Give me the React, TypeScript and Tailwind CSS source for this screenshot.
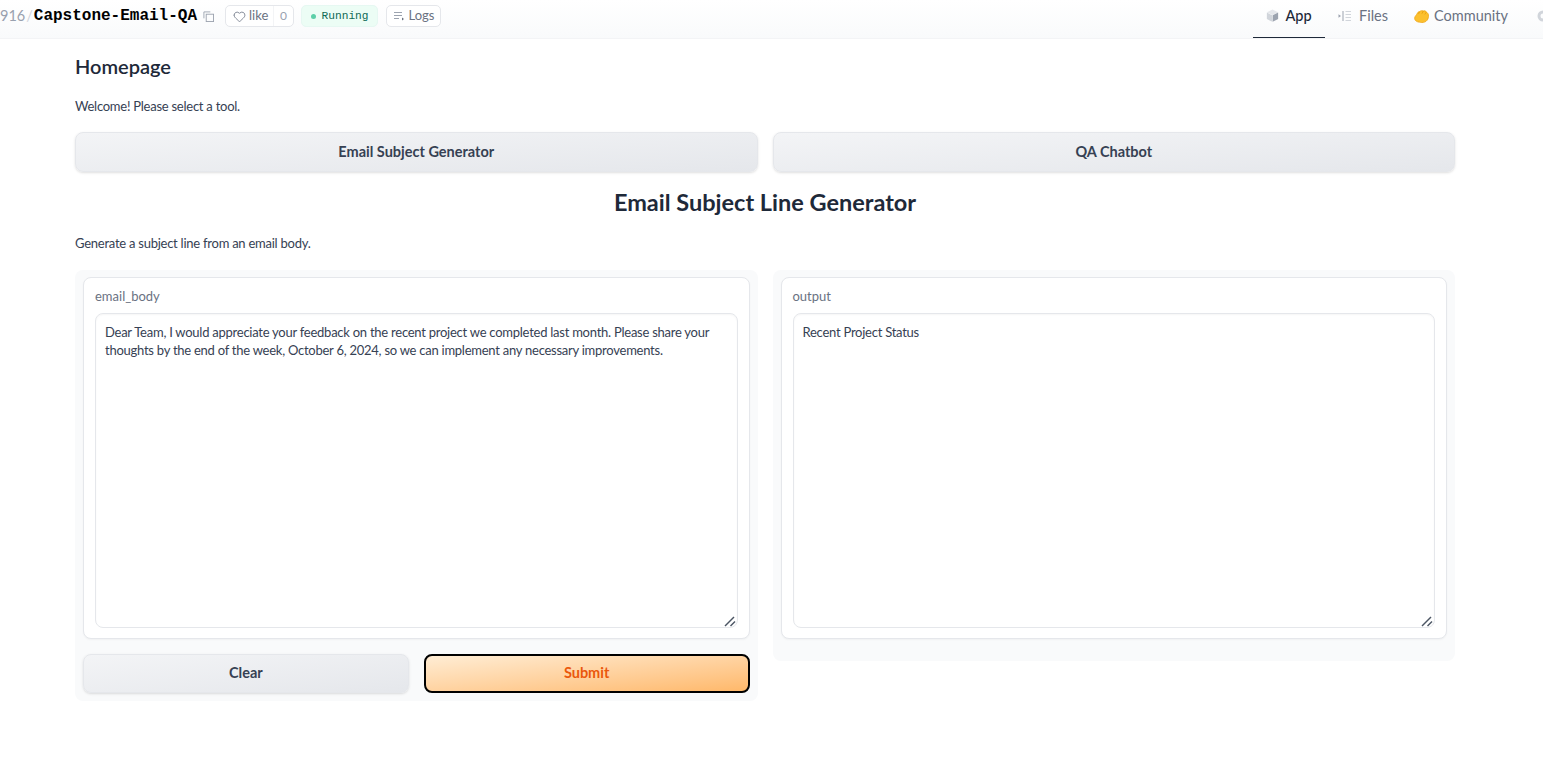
import { Heart } from "lucide-react";

const sans = "font-['Lato',sans-serif]";

function CubeIcon() {
  return (
    <svg viewBox="0 0 12 12" className="w-[13px] h-[13px]">
      <path d="M6 .4 11.200 3 6 5.600 .8 3z" fill="#e5e7eb" />
      <path d="M.8 3.200 5.800 5.800V11.800L.8 9.200z" fill="#d1d5db" />
      <path d="M11.200 3.200 6.200 5.800V11.800L11.200 9.200z" fill="#9ca3af" />
    </svg>
  );
}

function FilesIcon() {
  return (
    <svg viewBox="0 0 14 12" className="w-[14px] h-[12px]" fill="none" stroke="#9ca3af">
      <path d="M0.500 4.200 3 6 .5 7.800z" fill="#9ca3af" stroke="none" />
      <path d="M5 1v10" />
      <path d="M7.500 1.500H13M7.500 4.500H13M7.500 7.500H13M7.500 10.500H13" stroke="#d1d5db" />
    </svg>
  );
}

function HandIcon() {
  return (
    <svg viewBox="0 0 16 14" className="w-[15px] h-[13px]">
      <path
        d="M.6 9C.6 7 2 6 3 4.500 3.600 3 4.600 1.700 6 1.700 7 .7 8.600.4 10 1c1.300-.4 2.600 0 3.200 1.200 1.200.7 2.100 1.800 2.300 3.200.2 2-.2 4-1.300 5.500-1.300 1.800-3.700 2.700-5.900 2.600C5.300 13.400.6 12.500.6 9z"
        fill="#fcc02e"
        stroke="#eea20f"
        strokeWidth=".8"
      />
      <path d="M6 1.800 4.800 4.400M10 1.100 8.400 4M13.200 2.200 11.600 4.800" stroke="#e49a0b" strokeWidth=".8" fill="none" />
    </svg>
  );
}

function TopBar() {
  return (
    <header className="h-[39px] flex items-center justify-between border-b border-gray-100 bg-gradient-to-t from-gray-50 to-white overflow-hidden">
      <div className="flex items-center pb-[6px]">
        <span className="text-[14.500px] text-gray-400">916</span>
        <span className="text-[14.500px] text-gray-300 mx-[1px]">/</span>
        <span className="font-['Liberation_Mono',monospace] font-bold text-[16px] text-black">Capstone-Email-QA</span>
        <svg viewBox="0 0 12 12" className="w-[11px] h-[11px] ml-[6px] mr-[11px]" fill="none" stroke="#9ca3af">
          <rect x="3.500" y="3.500" width="8" height="8" />
          <path d="M1 8V1h7" />
        </svg>
        <div className="h-[22px] w-[69px] flex items-center border border-gray-200 rounded-[5px] bg-white text-[13px] text-gray-500">
          <span className="flex items-center gap-[3px] pl-[7px] w-[48px] h-full border-r border-gray-100">
            <Heart className="w-[13px] h-[13px]" strokeWidth={1.500} />
            like
          </span>
          <span className="flex-1 text-center text-gray-400 text-[12px]">0</span>
        </div>
        <div className="ml-[7px] h-[22px] w-[77px] flex items-center justify-center gap-[6px] rounded-[5px] border border-[#e6f8f2] bg-[#ecfdf5] font-['Liberation_Mono',monospace] text-[11.200px] text-[#0f6b57]">
          <span className="w-[5px] h-[5px] rounded-full bg-[#5ccfa8]" />
          <span className="pt-[1px]">Running</span>
        </div>
        <div className="ml-[8px] h-[22px] w-[55px] flex items-center justify-center gap-[4px] rounded-[5px] border border-gray-200 bg-white text-[13px] text-gray-500">
          <svg viewBox="0 0 12 12" className="w-[12px] h-[12px]" fill="none" stroke="#9ca3af">
            <path d="M1 2.500H9M1 5.500H9M1 8.500H6" />
            <path d="M9 7.500 11 9 9 10.500z" fill="#6b7280" stroke="none" />
          </svg>
          Logs
        </div>
      </div>
      <nav className="flex items-center h-full -mr-[12px] text-[14.500px]">
        <div className="h-full w-[72px] flex items-center justify-center gap-[6px] border-b border-gray-800 pb-[6px] text-gray-800 font-medium">
          <CubeIcon />
          App
        </div>
        <div className="h-full ml-[13px] pb-[6px] flex items-center gap-[7px] text-gray-500">
          <FilesIcon />
          Files
        </div>
        <div className="h-full ml-[26px] pb-[6px] flex items-center gap-[5px] text-gray-500">
          <HandIcon />
          Community
        </div>
        <div className="h-full ml-[28px] pb-[6px] w-[19px] flex items-center">
          <svg viewBox="0 0 14 14" className="w-[14px] h-[14px]" fill="none" stroke="#d1d5db" strokeWidth="3">
            <circle cx="7" cy="7" r="4" />
          </svg>
        </div>
      </nav>
    </header>
  );
}

function TextPanel({ label, value }: { label: string; value: string }) {
  return (
    <div className="h-[362px] flex flex-col bg-white border border-gray-200 rounded-[8px] shadow-[0_1px_2px_rgba(0,0,0,0.04)] px-[11px] pt-[9px] pb-[10px]">
      <div className="text-[13px] text-gray-500 leading-[18px] mb-[8px]">{label}</div>
      <div className="relative flex-1">
        <textarea
          readOnly
          defaultValue={value}
          className="w-full h-full block resize-none bg-white border border-gray-200 rounded-[8px] px-[9px] pt-[9px] pb-[9px] text-[13px] tracking-[-0.25px] leading-[18px] text-gray-700 outline-none shadow-[inset_0_1px_2px_rgba(0,0,0,0.04)]"
        />
        <svg viewBox="0 0 12 12" className="absolute right-[2px] bottom-[1px] w-[12px] h-[12px]" fill="none" stroke="#4b5563" strokeWidth="1.400">
          <path d="M1 11 10 2" />
          <path d="M6.500 11 11 6.500" />
        </svg>
      </div>
    </div>
  );
}

export default function App() {
  return (
    <div className={`min-h-[763px] bg-white ${sans}`}>
      <TopBar />
      <main className="w-[1380px] ml-[75px]">
        <h2 className="text-[20px] font-semibold leading-[28px] text-gray-800 mt-[13px]">Homepage</h2>
        <p className="text-[13px] tracking-[-0.25px] leading-[18px] text-gray-700 mt-[17px]">Welcome! Please select a tool.</p>

        <div className="grid grid-cols-2 gap-[15px] mt-[17px]">
          <button className="h-[40px] pb-[1px] rounded-[8px] border border-gray-200 bg-gradient-to-br from-gray-100 to-gray-200 shadow-sm text-[14.500px] font-bold text-gray-700">
            Email Subject Generator
          </button>
          <button className="h-[40px] pb-[1px] rounded-[8px] border border-gray-200 bg-gradient-to-br from-gray-100 to-gray-200 shadow-sm text-[14.500px] font-bold text-gray-700">
            QA Chatbot
          </button>
        </div>

        <h1 className="text-center text-[23.500px] font-bold leading-[32px] text-gray-800 mt-[14px]">
          Email Subject Line Generator
        </h1>
        <p className="text-[13px] tracking-[-0.25px] leading-[18px] text-gray-700 mt-[16px]">Generate a subject line from an email body.</p>

        <div className="grid grid-cols-2 gap-[15px] items-start mt-[18px]">
          <section className="bg-gray-50 rounded-[8px] px-[8px] pt-[7px] pb-[8px]">
            <TextPanel
              label="email_body"
              value="Dear Team, I would appreciate your feedback on the recent project we completed last month. Please share your thoughts by the end of the week, October 6, 2024, so we can implement any necessary improvements."
            />
            <div className="grid grid-cols-2 gap-[15px] mt-[15px]">
              <button className="h-[39px] pb-[1px] rounded-[8px] border border-gray-200 bg-gradient-to-br from-gray-100 to-gray-200 shadow-sm text-[14.500px] font-bold text-gray-700">
                Clear
              </button>
              <button className="h-[39px] pb-[1px] rounded-[8px] border-2 border-black bg-gradient-to-br from-orange-100 to-orange-300 text-[14.500px] font-bold text-[#ea580c]">
                Submit
              </button>
            </div>
          </section>
          <section className="bg-gray-50 rounded-[8px] px-[8px] pt-[7px] pb-[22px]">
            <TextPanel label="output" value="Recent Project Status" />
          </section>
        </div>
      </main>
    </div>
  );
}
